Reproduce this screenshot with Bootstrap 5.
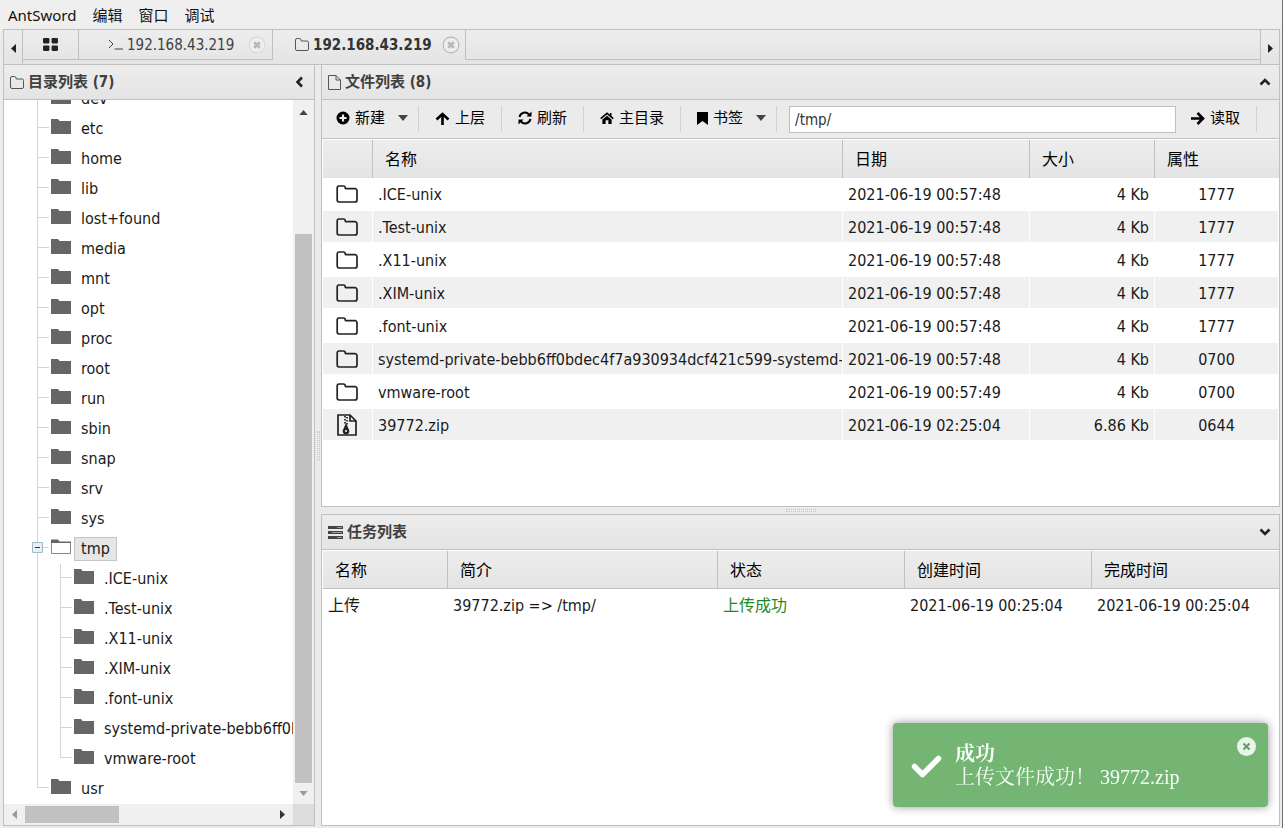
<!DOCTYPE html>
<html lang="zh-CN">
<head>
<meta charset="utf-8">
<meta name="viewport" content="width=device-width, initial-scale=1">
<title>AntSword</title>
<link href="https://cdn.jsdelivr.net/npm/bootstrap@5.3.0/dist/css/bootstrap.min.css" rel="stylesheet">
<style>
:root{--line:#c0c0c0;--grad:linear-gradient(#ededed,#e4e4e4)}
body{font-family:"DejaVu Sans Condensed","Noto Sans CJK SC",sans-serif;font-size:16px;line-height:20px;color:#1a1a1a;background:#ebebeb}
svg{display:block;flex:none}
a{color:inherit;text-decoration:none}
button{border:0;background:none;padding:0;color:inherit}
.app{height:100vh;border-right:1px solid #6d6d72}
.menubar{height:29px;flex:none;font-family:"Noto Sans","Noto Sans CJK SC",sans-serif;font-size:15px;background:#efefef;padding:0 8px;gap:16px;color:#111}
.tabrow{height:36px;flex:none;margin:0 2px 0 3px;border:1px solid var(--line);background:var(--grad)}
.arrow{width:18px;padding-top:3px}
.tabs{border:solid var(--line);border-width:0 1px;min-width:0}
.tab{height:30px;border:solid var(--line);border-width:0 1px 1px 0;font-size:15px;color:#404040}
.tab-grid{width:56px}
.tab-shell{width:194px;padding-left:29px;padding-right:6px}
.tab.current{width:193px;border-bottom-color:transparent;padding-left:22px;padding-right:5px;font-weight:700;color:#333}
.tabfill{height:30px;border-bottom:1px solid var(--line)}
.work{margin:0 2px 2px 3px;min-height:0}
.leftpane{width:312px;flex:none;border:solid var(--line);border-width:0 1px 1px 1px}
.split-v{width:6px;flex:none}
.split-h{height:7px;flex:none}
.grip-v{width:3px;height:30px;border:dotted #c4c4c4;border-width:0 1px}
.grip-h{width:30px;height:3px;border:dotted #c4c4c4;border-width:1px 0}
.pane{border:1px solid var(--line);background:#fff}
.pane.first{border-top:0;height:442px;flex:none}
.pane.second{min-height:0}
.panehead{height:35px;flex:none;background:var(--grad);border-bottom:1px solid var(--line);padding:0 8px 0 6px;color:#404040}
.leftpane .panehead{padding-right:10px}
.panehead h2{font-size:15px;line-height:20px;font-weight:700;margin:0}
.treebox{background:#fff;min-height:0;min-width:0}
.tree{min-height:0;min-width:0}
.tree ul{list-style:none;margin:0;padding:0}
.tree li{position:relative;white-space:nowrap}
.tree ul.root{margin-left:33px}
.tree .item{height:30px;padding-left:14px}
.tree ul.sub{margin-left:23px}
.tree li::before{content:"";position:absolute;left:0;top:0;bottom:0;border-left:1px solid #d4d4d4}
.tree li:last-child::before{bottom:auto;height:14px}
.tree li::after{content:"";position:absolute;left:0;top:13px;width:12px;border-top:1px solid #d4d4d4}
.tree .label{padding:1px 6px;border:1px solid transparent}
.tree .item svg{margin:0 3px 5px 0}
.tree .picked{background:#e6e6e6;border-color:#c4c4c4}
.minus{position:absolute;z-index:1;left:-5px;top:8px;width:11px;height:11px;background:#e6eff5;border:1px solid #a3b8c6;border-radius:1px}
.minus::after{content:"";position:absolute;left:2px;right:2px;top:4px;border-top:1px solid #333}
.vbar{width:21px;flex:none;background:#f0f0f0;padding:2px 2px 0}
.vbar .cap{height:21px}
.vbar .thumb{height:549px;background:#c1c1c1}
.hbar{height:21px;flex:none;background:#f0f0f0}
.hbar .cap{width:21px}
.hbar .thumb{width:94px;background:#c1c1c1;margin:2px 0}
.hbar .corner{width:21px;background:#dcdcdc}
.tools{height:39px;flex:none;background:#ebebeb;border-bottom:1px solid var(--line);padding:0 22px 0 6px;font-size:15px;color:#000}
.tool{height:26px;border-right:1px solid #d0d0d0;gap:5px;flex:none;padding:0 16px 2px 8px;margin-right:8px}
.tool.drop{padding-right:10px}
.tool.last{padding:0 16px 2px 15px;margin:0}
.path{flex:1 1 0;min-width:80px;height:27px;border:1px solid var(--line);border-radius:0;padding:1px 5px 0;font-size:15px;color:#333;margin-left:4px;background:#fff}
.grid{width:100%;table-layout:fixed;border-collapse:separate;border-spacing:0}
.grid th{height:38px;font-weight:400;color:#000;background:var(--grad);border:0;border-right:1px solid var(--line);padding:2px 12px 0}
.grid th:last-child{border-right:0}
.grid td{height:33px;padding:2px 5px 0;white-space:nowrap;overflow:hidden;border:solid #fff;border-width:0 1px 2px 0;background-clip:padding-box}
.files td:first-child{padding:0 0 0 13px}
.files tbody tr:nth-child(even) td{background-color:#f0f0f0}
.files,.jobs{border:solid #fff;border-width:1px 0 0 1px}
.jobs th{border-bottom:1px solid var(--line)}
.alertbox{right:15px;bottom:21px;width:375px;height:84px;padding:14px 12px 0 18px;gap:12px;background:#74b574;color:#f7fff7;border-radius:4px;box-shadow:0 0 10px #999;font-family:"Liberation Serif","Noto Serif CJK SC","Noto Sans CJK SC",serif;font-size:20px;line-height:23px}
.alertbox .message{padding-top:6px}
.done{color:#1d8a1d}
</style>
</head>
<body>
<svg width="0" height="0" class="position-absolute" aria-hidden="true">
<defs>
<symbol id="dir" viewBox="0 0 20 15"><path d="M0 0h7l1.500 2H20v13H0z" fill="#666"/></symbol>
<symbol id="diropen" viewBox="0 0 20 15"><path d="M.5 14.500V3.500h19v11z" fill="#fff" stroke="#888"/><path d="M0 .5h7l1.500 2H20v1.500H0z" fill="#666"/></symbol>
<symbol id="outline" viewBox="0 0 22 18"><path d="M1.200 3A2 2 0 0 1 3 1h4.500q1.700 0 1.700 1.700 0 1 1 1H19a2 2 0 0 1 2 2V15a2 2 0 0 1-2 2H3a2 2 0 0 1-1.800-2z" fill="none" stroke="#222" stroke-width="1.700"/></symbol>
<symbol id="thin" viewBox="0 0 14 13"><path d="M.5 2Q.5.500 2 .5h2.500Q6 .5 6 2t1 1h5q1.500 0 1.500 1.500V11q0 1.500-1.500 1.500H2Q.5 12.500.5 11z" fill="none" stroke="#555"/></symbol>
<symbol id="page" viewBox="0 0 13 15"><path d="M.5.500h7.500l4.500 4.500v9.500H.5zM8 .5V5h4.500" fill="none" stroke="#555"/></symbol>
<symbol id="close" viewBox="0 0 16 16"><circle cx="8" cy="8" r="7" fill="#eee" stroke="currentColor"/><path d="m5.500 5.500 5 5m0-5-5 5" stroke="#b8b8b8" stroke-width="2.400"/></symbol>
<symbol id="tri" viewBox="0 0 10 6"><path d="M0 0h10L5 6z" fill="currentColor"/></symbol>
<symbol id="chev" viewBox="0 0 12 8"><path d="m1.500 1.500 4.500 4.500 4.500-4.500" fill="none" stroke="#222" stroke-width="2.600"/></symbol>
</defs>
</svg>
<div class="app d-flex flex-column">
<nav class="menubar d-flex align-items-center"><a href="#">AntSword</a><a href="#">编辑</a><a href="#">窗口</a><a href="#">调试</a></nav>
<div class="tabrow d-flex">
<button class="arrow d-flex align-items-center justify-content-center" aria-label="向左"><svg width="5" height="9" viewBox="0 0 5 9"><path d="M5 0v9L0 4.500z" fill="#222"/></svg></button>
<div class="tabs d-flex flex-fill">
<button class="tab tab-grid d-flex align-items-center justify-content-center" aria-label="主页"><svg width="15" height="13" viewBox="0 0 14 12" fill="#222"><rect width="6" height="5" rx="1"/><rect x="8" width="6" height="5" rx="1"/><rect y="7" width="6" height="5" rx="1"/><rect x="8" y="7" width="6" height="5" rx="1"/></svg></button>
<div class="tab tab-shell d-flex align-items-center"><svg width="15" height="11" viewBox="0 0 15 11" fill="none" stroke="#444"><path d="m1 1 4 4-4 4M6.500 10H15"/></svg><a href="#" class="ms-1 me-auto">192.168.43.219</a><button aria-label="关闭"><svg width="18" height="18" color="#d8d8d8"><use href="#close"/></svg></button></div>
<div class="tab current d-flex align-items-center"><svg width="14" height="13"><use href="#thin"/></svg><a href="#" class="ms-1 me-auto">192.168.43.219</a><button aria-label="关闭"><svg width="18" height="18" color="#b8b8b8"><use href="#close"/></svg></button></div>
<div class="tabfill flex-fill"></div>
</div>
<button class="arrow d-flex align-items-center justify-content-center" aria-label="向右"><svg width="5" height="9" viewBox="0 0 5 9"><path d="M0 0v9l5-4.500z" fill="#222"/></svg></button>
</div>
<div class="work d-flex flex-fill">
<aside class="leftpane d-flex flex-column">
<div class="panehead d-flex align-items-center"><svg width="14" height="13"><use href="#thin"/></svg><h2 class="ms-1 me-auto">目录列表 (7)</h2><button aria-label="收起"><svg width="9" height="12" viewBox="0 0 8 12"><path d="M6.500 1.500 2 6l4.500 4.500" fill="none" stroke="#222" stroke-width="2.600"/></svg></button></div>
<div class="treebox d-flex flex-fill">
<div class="tree flex-fill overflow-hidden d-flex flex-column justify-content-end">
<ul class="root" id="tree"></ul>
</div>
<div class="vbar d-flex flex-column">
<div class="cap d-flex align-items-center justify-content-center"><svg width="9" height="5" viewBox="0 0 10 6"><path d="M0 6h10L5 0z" fill="#444"/></svg></div>
<div class="flex-fill"></div><div class="thumb"></div>
<div class="cap d-flex align-items-center justify-content-center"><svg width="9" height="5" color="#999"><use href="#tri"/></svg></div>
</div>
</div>
<div class="hbar d-flex"><div class="cap d-flex align-items-center justify-content-center"><svg width="5" height="9" viewBox="0 0 5 9"><path d="M5 0v9L0 4.500z" fill="#999"/></svg></div><div class="thumb"></div><div class="flex-fill"></div><div class="cap d-flex align-items-center justify-content-center"><svg width="5" height="9" viewBox="0 0 5 9"><path d="M0 0v9l5-4.500z" fill="#333"/></svg></div><div class="corner"></div></div>
</aside>
<div class="split-v d-flex align-items-center justify-content-center"><div class="grip-v"></div></div>
<main class="d-flex flex-column flex-fill overflow-hidden">
<section class="pane first d-flex flex-column">
<div class="panehead d-flex align-items-center"><svg width="13" height="15"><use href="#page"/></svg><h2 class="ms-1 me-auto">文件列表 (8)</h2><button aria-label="收起"><svg width="12" height="8" viewBox="0 0 12 8"><path d="M1.500 6.500 6 2l4.500 4.500" fill="none" stroke="#222" stroke-width="2.600"/></svg></button></div>
<div class="tools d-flex align-items-center">
<button class="tool drop d-flex align-items-center"><svg width="14" height="14" viewBox="0 0 14 14"><circle cx="7" cy="7" r="6.500"/><path d="M7 3.500v7M3.500 7h7" stroke="#eee" stroke-width="2.200"/></svg>新建<svg class="ms-2" width="10" height="6" color="#444"><use href="#tri"/></svg></button>
<button class="tool d-flex align-items-center"><svg width="15" height="13" viewBox="0 0 15 13"><path d="M7.500 13V2.500M1.500 7.500l6-5.500 6 5.500" fill="none" stroke="#000" stroke-width="2.600"/></svg>上层</button>
<button class="tool d-flex align-items-center"><svg width="14" height="14" viewBox="0 0 14 14"><path d="M1.500 6a5.500 5.500 0 0 1 9.500-2.500M12.500 8A5.500 5.500 0 0 1 3 10.500" fill="none" stroke="#000" stroke-width="2"/><path d="M13.500.500v5h-5zM.5 13.500v-5h5z"/></svg>刷新</button>
<button class="tool d-flex align-items-center"><svg width="14" height="12" viewBox="0 0 15 13"><path d="M7.500 4 2.500 8v5H6V9h3v4h3.500V8z"/><path d="m.7 7.200 6.800-5.700 6.800 5.700M11.500 1v4" fill="none" stroke="#000" stroke-width="1.700"/></svg>主目录</button>
<button class="tool drop d-flex align-items-center"><svg width="11" height="13" viewBox="0 0 11 13"><path d="M0 0h11v13L5.500 9 0 13z"/></svg>书签<svg class="ms-2" width="10" height="6" color="#444"><use href="#tri"/></svg></button>
<input class="path" type="text" value="/tmp/" aria-label="路径">
<button class="tool last d-flex align-items-center"><svg width="14" height="13" viewBox="0 0 14 13"><path d="M0 6.500h11M6.500 1l5.500 5.500L6.500 12" fill="none" stroke="#000" stroke-width="2.600"/></svg>读取</button>
</div>
<table class="grid files">
<colgroup><col style="width:50px"><col><col style="width:187px"><col style="width:125px"><col style="width:124px"></colgroup>
<thead><tr><th></th><th>名称</th><th>日期</th><th>大小</th><th>属性</th></tr></thead>
<tbody id="files"></tbody>
</table>
</section>
<div class="split-h d-flex align-items-center justify-content-center"><div class="grip-h"></div></div>
<section class="pane second d-flex flex-column flex-fill">
<div class="panehead d-flex align-items-center"><svg width="15" height="13" viewBox="0 0 15 13"><path d="M0 0h15v3H0zM0 5h15v3H0zM0 10h15v3H0z" fill="#444"/><path d="M9 1.500h5M4 6.500h10M9 11.500h5" stroke="#999"/></svg><h2 class="ms-1 me-auto">任务列表</h2><button aria-label="收起"><svg width="12" height="8"><use href="#chev"/></svg></button></div>
<table class="grid jobs">
<colgroup><col style="width:125px"><col><col style="width:187px"><col style="width:187px"><col style="width:187px"></colgroup>
<thead><tr><th>名称</th><th>简介</th><th>状态</th><th>创建时间</th><th>完成时间</th></tr></thead>
<tbody><tr><td>上传</td><td>39772.zip =&gt; /tmp/</td><td class="done">上传成功</td><td>2021-06-19 00:25:04</td><td>2021-06-19 00:25:04</td></tr></tbody>
</table>
</section>
</main>
</div>
</div>
<div class="alertbox position-fixed d-flex" role="alert">
<svg class="mt-3" width="32" height="26" viewBox="0 0 32 26"><path d="m3.500 13.500 8 8 16-16" fill="none" stroke="#fff" stroke-width="5.500" stroke-linecap="round" stroke-linejoin="round"/></svg>
<div class="message flex-fill"><b>成功</b><br>上传文件成功！ 39772.zip</div>
<button class="align-self-start" aria-label="关闭"><svg width="19" height="19" viewBox="0 0 19 19"><circle cx="9.500" cy="9.500" r="9.500" fill="#e8f5e8"/><path d="m6.500 6.500 6 6m0-6-6 6" stroke="#5f9f5f" stroke-width="2"/></svg></button>
</div>
<script>
const icon=(n,w,h)=>`<svg width="${w}" height="${h}"><use href="#${n}"/></svg>`;
const names=['dev','etc','home','lib','lost+found','media','mnt','opt','proc','root','run','sbin','snap','srv','sys','tmp','usr'];
const kids=['.ICE-unix','.Test-unix','.X11-unix','.XIM-unix','.font-unix','systemd-private-bebb6ff0bdec4f7a930934dcf421c599-systemd-timesyncd','vmware-root'];
const item=(n,open)=>`<div class="item d-flex align-items-center">${icon(open?'diropen':'dir',20,15)}<span class="label${open?' picked':''}">${n}</span></div>`;
document.getElementById('tree').innerHTML=names.map(n=>n==='tmp'
 ?`<li><span class="minus"></span>${item(n,true)}<ul class="sub">${kids.map(k=>`<li>${item(k)}</li>`).join('')}</ul></li>`
 :`<li>${item(n)}</li>`).join('');
const zip='<svg width="22" height="22" viewBox="0 0 22 22" fill="none" stroke="#222" stroke-width="1.700"><path d="M2 1h12l6 6v14H2zM14 1v6h6"/><path d="M9 2v9M11 3v8" stroke-dasharray="1.500 1.500"/><path d="m10 11-2.500 6a2.500 2.500 0 0 0 5 0z" fill="#222"/><path d="M9 17h2" stroke="#fff"/></svg>';
const rows=[...kids.map((k,i)=>[k,i===6?'2021-06-19 00:57:49':'2021-06-19 00:57:48','4 Kb',i>4?'0700':'1777']),['39772.zip','2021-06-19 02:25:04','6.86 Kb','0644']];
document.getElementById('files').innerHTML=rows.map((r,i)=>`<tr><td>${i===7?zip:icon('outline',22,18)}</td><td>${r[0]}</td><td>${r[1]}</td><td class="text-end">${r[2]}</td><td class="text-center">${r[3]}</td></tr>`).join('');
</script>
<script src="https://cdn.jsdelivr.net/npm/bootstrap@5.3.0/dist/js/bootstrap.bundle.min.js"></script>
</body>
</html>
